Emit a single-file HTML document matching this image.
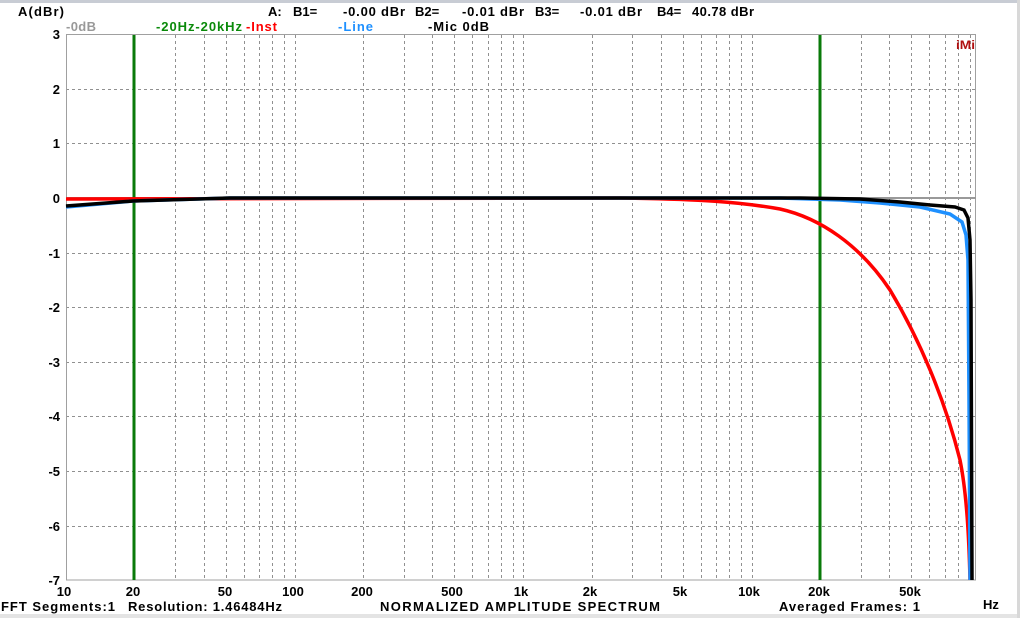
<!DOCTYPE html>
<html><head><style>
body{margin:0;background:#fff;width:1020px;height:618px;overflow:hidden;font-family:"Liberation Sans",Arial,sans-serif}
</style></head><body>
<svg width="1020" height="618" xmlns="http://www.w3.org/2000/svg" font-family="Liberation Sans, Arial, sans-serif" font-weight="bold" font-size="13">
<rect x="0" y="0" width="1020" height="3" fill="#c8ccd4"/>
<rect x="0" y="614" width="1020" height="4" fill="#e4e4e4"/>
<rect x="1017" y="0" width="3" height="618" fill="#d8d8d8"/>
<g stroke="#909090" stroke-width="1" stroke-dasharray="3,3" id="g"></g>
<rect x="66.5" y="34.5" width="909" height="545.5" fill="none" stroke="#a0a0a0"/>
<line x1="66" y1="198" x2="976" y2="198" stroke="#999" stroke-width="2"/>
<line x1="134" y1="35" x2="134" y2="580" stroke="#0a7a0a" stroke-width="3"/>
<line x1="820" y1="35" x2="820" y2="580" stroke="#0a7a0a" stroke-width="3"/>
<path fill="none" stroke="#ff0000" stroke-width="3.5" d="M66,199 L620,198 C700,199 740,202 780,209 C820,218 860,245 890,290 C920,340 945,400 960,460 C967,495 969,540 970,580"/>
<polyline fill="none" stroke="#1e90ff" stroke-width="3.5" points="66,207 133,201 230,198 780,198 840,200 880,203 920,207 950,214 962,222 966,235 968,260 969,400 970,580"/>
<polyline fill="none" stroke="#000" stroke-width="3.5" points="66,206 133,201 230,198 800,198 860,199 900,202 930,205 955,207 964,210 968,218 970,240 971,300 972,580"/>
<text x="956" y="49" font-size="12" fill="#b01010" textLength="19" lengthAdjust="spacingAndGlyphs">iMi</text>
<g text-anchor="end">
<text x="60" y="39">3</text><text x="60" y="94">2</text><text x="60" y="148">1</text><text x="60" y="203">0</text>
<text x="60" y="258">-1</text><text x="60" y="312">-2</text><text x="60" y="367">-3</text><text x="60" y="421">-4</text>
<text x="60" y="476">-5</text><text x="60" y="531">-6</text><text x="60" y="585">-7</text>
</g>
<g text-anchor="middle">
<text x="64" y="596">10</text><text x="133" y="596">20</text><text x="225" y="596">50</text><text x="293" y="596">100</text>
<text x="362" y="596">200</text><text x="452" y="596">500</text><text x="521" y="596">1k</text><text x="590" y="596">2k</text>
<text x="680" y="596">5k</text><text x="749" y="596">10k</text><text x="819" y="596">20k</text><text x="910" y="596">50k</text>
</g>
<text x="18" y="16" textLength="46">A(dBr)</text>
<text x="268" y="16">A:</text><text x="293" y="16">B1=</text><text x="343" y="16" textLength="62">-0.00 dBr</text>
<text x="415" y="16">B2=</text><text x="462" y="16" textLength="62">-0.01 dBr</text>
<text x="535" y="16">B3=</text><text x="580" y="16" textLength="62">-0.01 dBr</text>
<text x="657" y="16">B4=</text><text x="692" y="16" textLength="62">40.78 dBr</text>
<text x="66" y="31" fill="#999" textLength="30">-0dB</text>
<text x="156" y="31" fill="#0a8a0a" textLength="86">-20Hz-20kHz</text><text x="246" y="31" fill="#f00" textLength="31">-Inst</text>
<text x="338" y="31" fill="#1e90ff" textLength="35">-Line</text><text x="428" y="31" textLength="61">-Mic 0dB</text>
<text x="1" y="611" textLength="114">FFT Segments:1</text>
<text x="128" y="611" textLength="154">Resolution: 1.46484Hz</text>
<text x="380" y="611" textLength="280">NORMALIZED AMPLITUDE SPECTRUM</text>
<text x="779" y="611" textLength="141">Averaged Frames: 1</text>
<text x="983" y="609">Hz</text>
</svg>
<script>
var g=document.getElementById('g'),s='';
function X(f){return 66+228.5*Math.log10(f/10);}
for(var d=10;d<=10000;d*=10)for(var m=2;m<=9;m++){var x=X(d*m);if(x>975)break;if(Math.abs(x-134)<2||Math.abs(x-820)<2)continue;x=Math.round(x)+0.5;s+='<line x1="'+x+'" y1="35" x2="'+x+'" y2="580"/>';}
[100,1000,10000].forEach(function(f){var x=Math.round(X(f))+.5;s+='<line x1="'+x+'" y1="35" x2="'+x+'" y2="580"/>';});
for(var k=-6;k<=2;k++){if(k==0)continue;var y=Math.round(198-54.6*k)+.5;s+='<line x1="66" y1="'+y+'" x2="976" y2="'+y+'"/>';}
g.innerHTML=s;
</script>
</body></html>
